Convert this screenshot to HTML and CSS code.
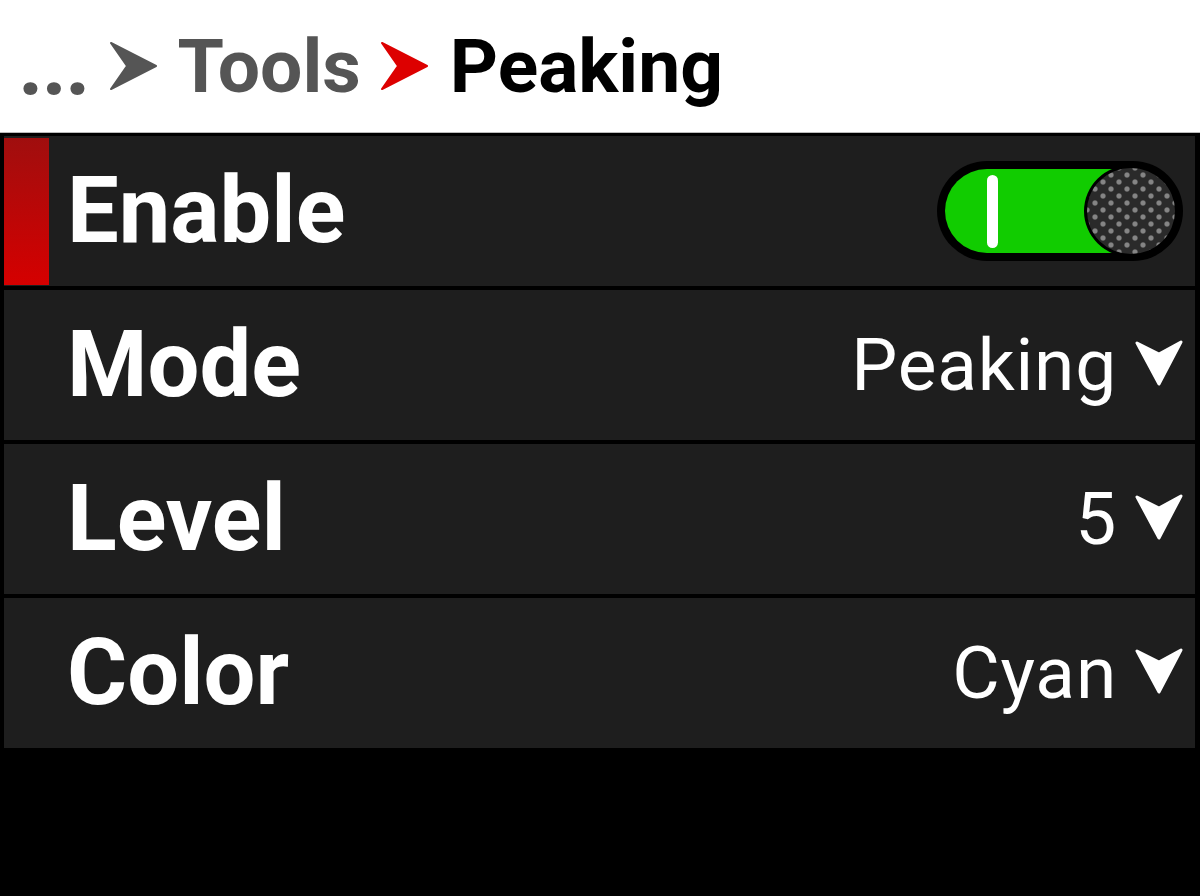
FILE: index.html
```html
<!DOCTYPE html>
<html>
<head>
<meta charset="utf-8">
<link rel="stylesheet" href="styles.css">
</head>
<body>
<header class="crumbs">
  <span class="crumb-dots">...</span>
  <svg class="crumb-sep" viewBox="0 0 47 48"><path d="M1 1 L46 24 L1 47 L17 24 Z" fill="#555" stroke="#555" stroke-width="2" stroke-linejoin="round"/></svg>
  <span class="crumb-prev">Tools</span>
  <svg class="crumb-sep red" viewBox="0 0 47 48"><path d="M1 1 L46 24 L1 47 L17 24 Z" fill="#dd0000" stroke="#dd0000" stroke-width="2" stroke-linejoin="round"/></svg>
  <span class="crumb-current">Peaking</span>
</header>
<main class="menu">
  <div class="row selected">
    <div class="sel-bar"></div>
    <span class="label">Enable</span>
    <div class="toggle">
      <div class="toggle-track">
        <span class="toggle-mark"></span>
      </div>
      <div class="toggle-knob"></div>
    </div>
  </div>
  <div class="row">
    <span class="label">Mode</span>
    <span class="value">Peaking</span>
    <svg class="caret" viewBox="0 0 48 46"><path d="M2 3 L24 14 L46 2 L24 44 Z" fill="#fff" stroke="#fff" stroke-width="3" stroke-linejoin="round"/></svg>
  </div>
  <div class="row">
    <span class="label">Level</span>
    <span class="value">5</span>
    <svg class="caret" viewBox="0 0 48 46"><path d="M2 3 L24 14 L46 2 L24 44 Z" fill="#fff" stroke="#fff" stroke-width="3" stroke-linejoin="round"/></svg>
  </div>
  <div class="row">
    <span class="label">Color</span>
    <span class="value">Cyan</span>
    <svg class="caret" viewBox="0 0 48 46"><path d="M2 3 L24 14 L46 2 L24 44 Z" fill="#fff" stroke="#fff" stroke-width="3" stroke-linejoin="round"/></svg>
  </div>
</main>
</body>
</html>
```

FILE: styles.css
```css
html, body {
  margin: 0;
  padding: 0;
  background: #000;
  height: 100%;
  overflow: hidden;
}

body {
  font-family: Roboto, "Liberation Sans", sans-serif;
}

.crumbs {
  height: 133px;
  background: #fff;
  border-bottom: 1px solid #bbb;
  display: flex;
  align-items: center;
  padding-left: 18px;
  box-sizing: border-box;
  font-weight: 700;
  font-size: 75px;
  line-height: 1;
}

.crumb-dots {
  color: #555;
  font-size: 88px;
  letter-spacing: -2px;
  margin-top: -2px;
}

.crumb-sep {
  width: 47px;
  height: 48px;
  margin: 0 21px 0 21px;
}

.crumb-sep.red {
  margin: 0 22px 0 20px;
}

.crumb-prev {
  color: #555;
}

.crumb-current {
  color: #000;
}

.menu {
  display: flex;
  flex-direction: column;
  gap: 4px;
  padding: 3px 5px 0 4px;
}

.row {
  height: 150px;
  background: #1e1e1e;
  display: flex;
  align-items: center;
  padding: 0 12px 0 63px;
  position: relative;
  color: #fff;
}

.sel-bar {
  position: absolute;
  left: 0;
  top: 2px;
  bottom: 1px;
  width: 45px;
  background: linear-gradient(#a00e0e, #d50000);
}

.label {
  font-weight: 700;
  font-size: 92px;
  line-height: 1;
  flex: 1;
}

.value {
  font-size: 73px;
  font-weight: 400;
  line-height: 1;
  letter-spacing: 0.8px;
}

.caret {
  width: 48px;
  height: 46px;
  margin-left: 18px;
  margin-top: -4px;
}

.toggle {
  width: 246px;
  height: 100px;
  background: #000;
  border-radius: 50px;
  position: relative;
}

.toggle-track {
  position: absolute;
  left: 8px;
  top: 8px;
  width: 170px;
  height: 84px;
  background: #11cc00;
  border-radius: 42px 0 0 42px;
}

.toggle-mark {
  position: absolute;
  left: 42px;
  top: 6px;
  width: 11px;
  height: 73px;
  background: #fff;
  border-radius: 6px;
}

.toggle-knob {
  position: absolute;
  right: 5px;
  top: 4px;
  width: 94px;
  height: 92px;
  border-radius: 50%;
  box-sizing: border-box;
  border: 3px solid #000;
  background-color: #2a2a2a;
  background-image:
    radial-gradient(circle, #858585 2px, transparent 3.2px),
    radial-gradient(circle, #858585 2px, transparent 3.2px);
  background-size: 16px 14px, 16px 14px;
  background-position: 0 0, 8px 7px;
}
```
